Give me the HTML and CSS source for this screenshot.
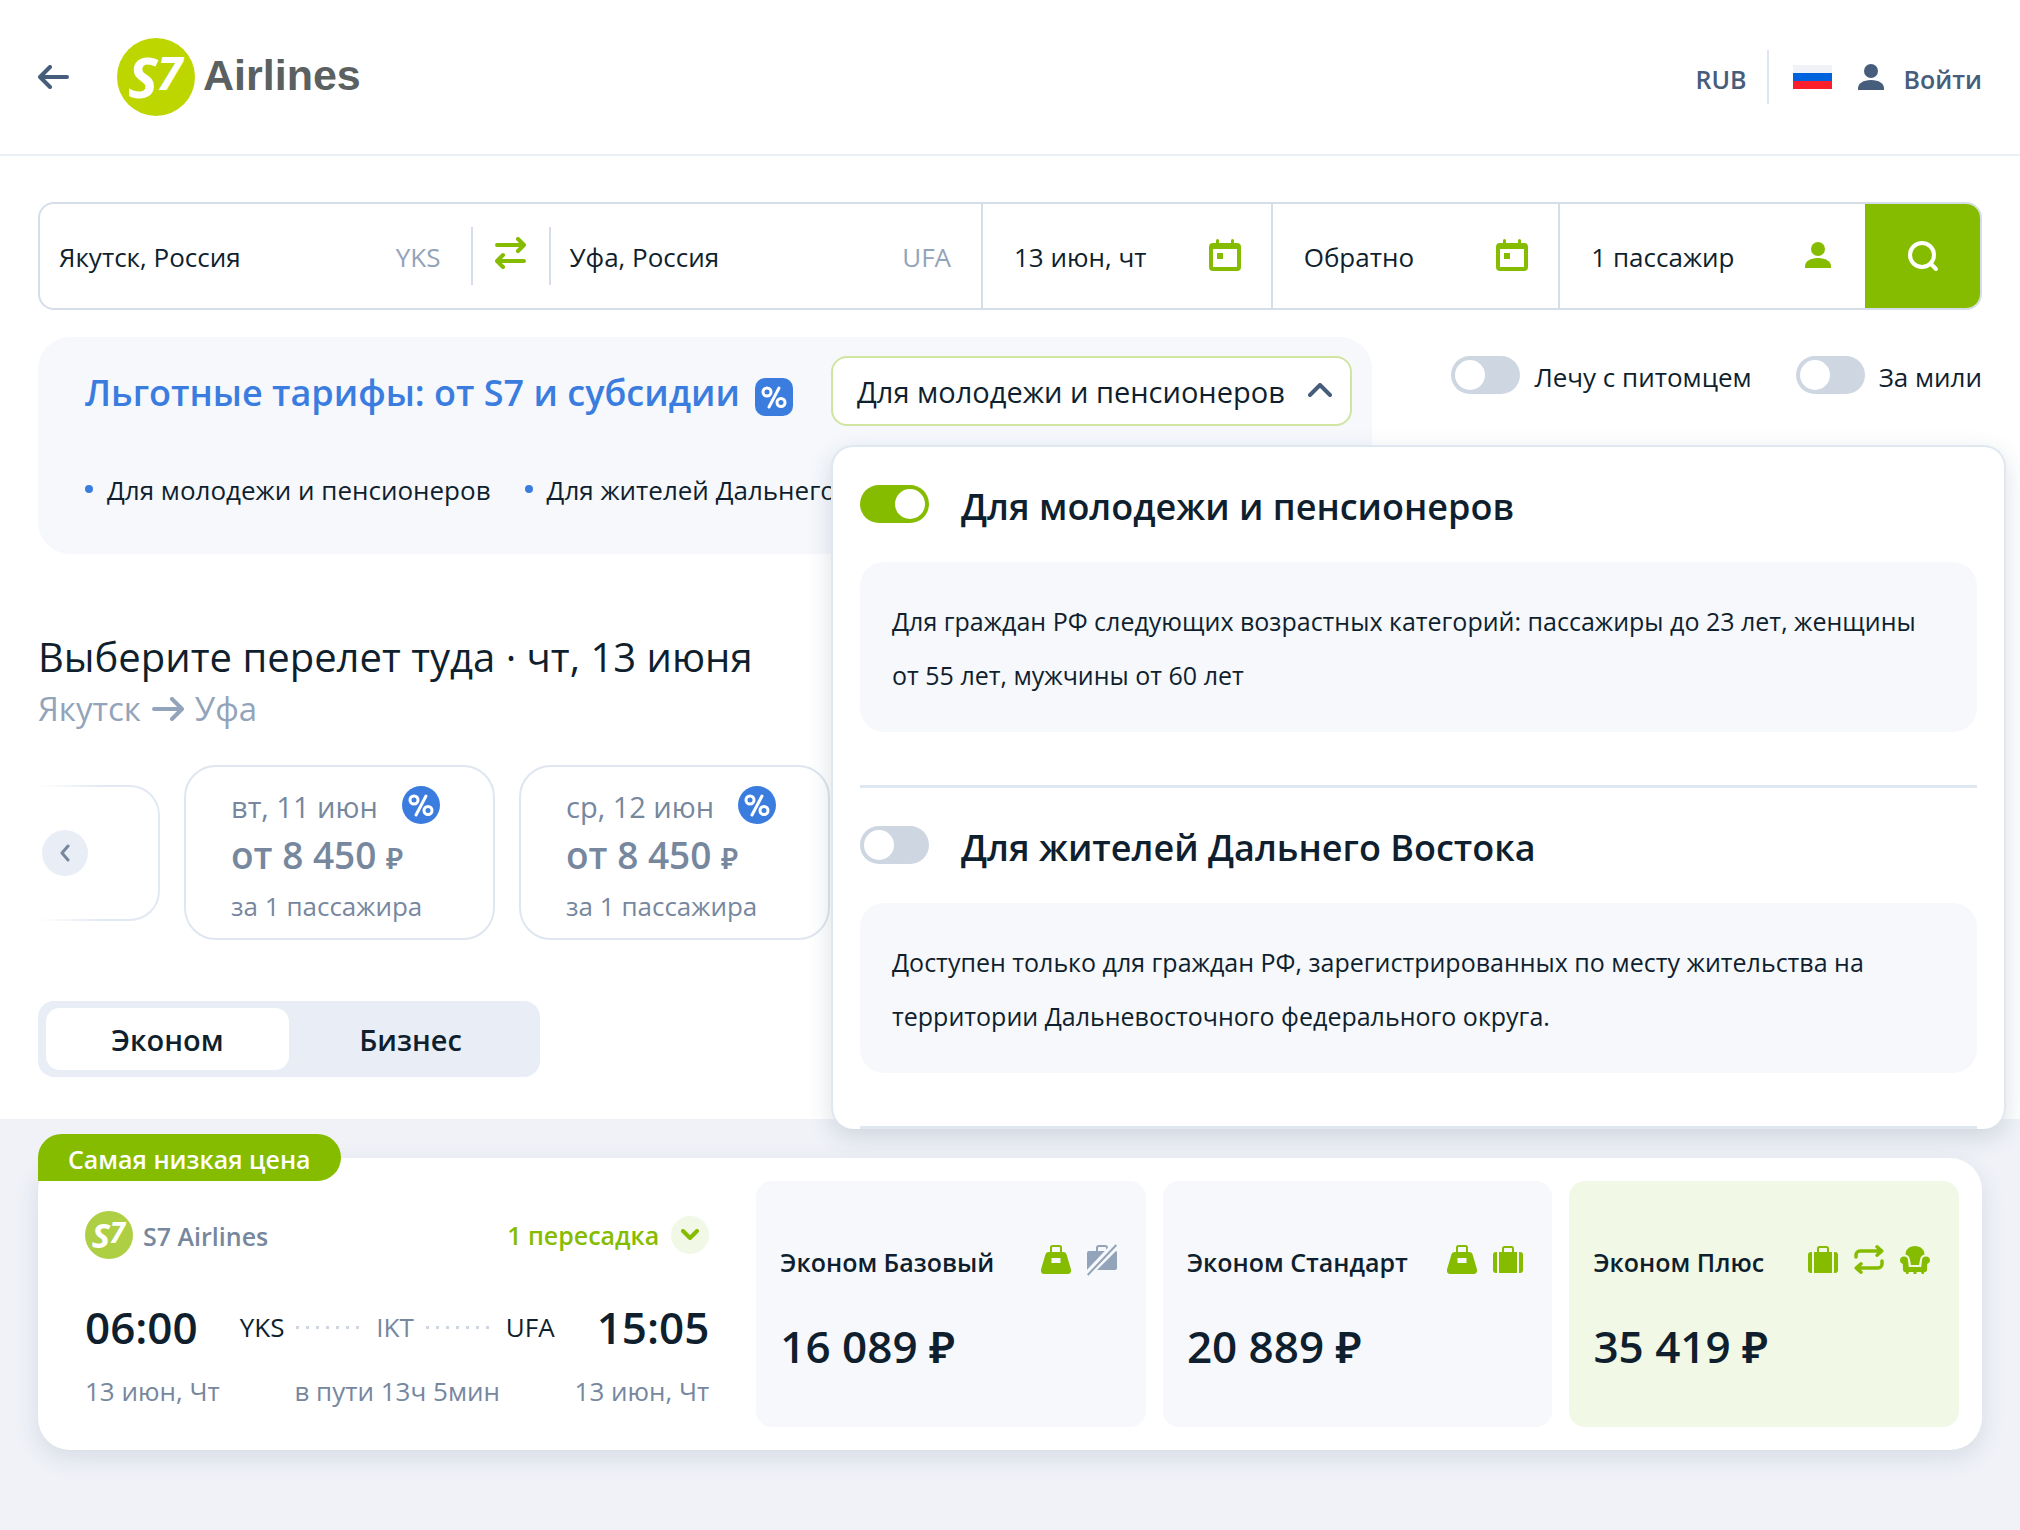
FILE: index.html
```html
<!DOCTYPE html>
<html lang="ru">
<head>
<meta charset="utf-8">
<meta name="viewport" content="width=device-width, initial-scale=1">
<title>S7 Airlines</title>
<link rel="stylesheet" href="styles.css">
</head>
<body>
<svg class="sprite" aria-hidden="true">
  <symbol id="calendar" viewBox="0 0 32 32">
    <path fill="currentColor" fill-rule="evenodd" d="M7 1.500a1.500 1.500 0 0 1 3 0V4h12V1.500a1.500 1.500 0 0 1 3 0V4h3a4 4 0 0 1 4 4v20a4 4 0 0 1-4 4H4a4 4 0 0 1-4-4V8a4 4 0 0 1 4-4h3zM4 10v18h24V10zM8 14h6v6H8z"/>
  </symbol>
  <symbol id="person" viewBox="0 0 26 26">
    <circle cx="13" cy="7" r="7" fill="currentColor"/>
    <path fill="currentColor" d="M0 26v-1.500c0-5 5-8.500 13-8.500s13 3.500 13 8.500V26z"/>
  </symbol>
  <symbol id="bag" viewBox="0 0 30 30">
    <path fill="none" stroke="currentColor" stroke-width="2" d="M10 9V2.500A1.500 1.500 0 0 1 11.500 1h7A1.500 1.500 0 0 1 20 2.500V9"/>
    <path fill="currentColor" fill-rule="evenodd" d="M8 7h14c2 0 3 .8 3.600 2.500L30 24.500c.4 3-.8 4.500-3 4.500H3c-2.200 0-3.400-1.500-3-4.500l4.400-15C5 7.800 6 7 8 7zM10.500 13v5h9v-5z"/>
  </symbol>
  <symbol id="suitcase" viewBox="0 0 30 30">
    <path fill="none" stroke="currentColor" stroke-width="2" d="M10 8V3.500A1.500 1.500 0 0 1 11.500 2h7A1.500 1.500 0 0 1 20 3.500V8"/>
    <path fill="currentColor" d="M6 7h18v21H6zM4 7v21H3a3 3 0 0 1-3-3V10a3 3 0 0 1 3-3zM26 7v21h1a3 3 0 0 0 3-3V10a3 3 0 0 0-3-3z"/>
  </symbol>
  <symbol id="no-luggage" viewBox="0 0 30 32">
    <path fill="none" stroke="currentColor" stroke-width="2" d="M10 8V4a2 2 0 0 1 2-2h6a2 2 0 0 1 2 2v4"/>
    <path fill="currentColor" d="M2 7h19L0 28V9a2 2 0 0 1 2-2zM29 7a2 2 0 0 1 1 1.500V24a2 2 0 0 1-2 2H10z"/>
    <path fill="none" stroke="#f6f8fc" stroke-width="3" d="M0 28L25 1.500"/>
    <path fill="none" stroke="currentColor" stroke-width="2" d="M.7 31L29.300 1"/>
  </symbol>
  <symbol id="exchange" viewBox="0 0 30 30">
    <path fill="none" stroke="currentColor" stroke-width="3.500" stroke-linecap="round" stroke-linejoin="round" d="M2 12V10a4 4 0 0 1 4-4H27M23 1.800L27.800 6 23 10.200M28 16v3a4 4 0 0 1-4 4H3M7 18.800L2.200 23 7 27.200"/>
  </symbol>
  <symbol id="armchair" viewBox="0 0 30 30">
    <path fill="currentColor" d="M15 1c5.500 0 9.500 3.500 9.500 8.500-2.800.7-4.200 2.500-4.500 5.500l-1 5h-8l-1-5c-.3-3-1.700-4.800-4.500-5.500C5.500 4.500 9.500 1 15 1z"/>
    <path fill="currentColor" d="M4 11.500c2.500 0 4 1.600 4 4l.8 6.500h12.400l.8-6.500c0-2.400 1.500-4 4-4s4 1.700 4 3.800c0 1.700-1 3.100-2.800 3.700L27 25c-.2 1.500-1 2-2.500 2l-.8 2h-1.900L21 27h-4.500v2h-3v-2H9l-.8 2H6.300l-.8-2C4 27 3.200 26.500 3 25l-.2-6C1 18.400 0 17 0 15.300c0-2.100 1.500-3.800 4-3.800z"/>
  </symbol>
  <symbol id="percent" viewBox="0 0 38 38">
    <g fill="none" stroke="#fff" stroke-width="3"><circle cx="12" cy="14" r="4"/><circle cx="26" cy="24.500" r="4"/><path stroke-linecap="round" d="M24 10L14 29"/></g>
  </symbol>
</svg>

<header class="header">
  <a class="back" href="#" aria-label="Назад">
    <svg width="31" height="24" viewBox="0 0 31 24"><path fill="none" stroke="currentColor" stroke-width="4" stroke-linecap="round" stroke-linejoin="round" d="M12 2L2 12l10 10M3 12h26"/></svg>
  </a>
  <a class="logo" href="#">
    <svg class="logo-mark" viewBox="0 0 78 78">
      <circle cx="39" cy="39" r="39" fill="currentColor"/>
      <text class="s7-mark" x="11" y="60" font-size="56">S</text>
      <text class="s7-mark" x="40" y="52" font-size="46">7</text>
    </svg>
    <span class="logo-name">Airlines</span>
  </a>
  <nav class="account">
    <button class="currency" type="button">RUB</button>
    <span class="account-line"></span>
    <button class="flag" type="button" aria-label="Россия"></button>
    <a class="login" href="#"><svg width="26" height="26" aria-hidden="true"><use href="#person"/></svg><span>Войти</span></a>
  </nav>
</header>

<main>
  <section class="top">
    <form class="search">
      <label class="field"><input type="text" value="Якутск, Россия" aria-label="Откуда"><span class="code">YKS</span></label>
      <button class="swap" type="button" aria-label="Поменять местами">
        <svg width="31" height="32" viewBox="0 0 31 32"><path fill="none" stroke="currentColor" stroke-width="4" stroke-linecap="round" stroke-linejoin="round" d="M2 8h26M23 2l6 6-6 6M29 24H3M8 18l-6 6 6 6"/></svg>
      </button>
      <label class="field"><input type="text" value="Уфа, Россия" aria-label="Куда"><span class="code">UFA</span></label>
      <button class="pick" type="button">13 июн, чт<svg width="32" height="32" aria-hidden="true"><use href="#calendar"/></svg></button>
      <button class="pick" type="button">Обратно<svg width="32" height="32" aria-hidden="true"><use href="#calendar"/></svg></button>
      <button class="pick pick-people" type="button">1 пассажир<svg width="26" height="26" aria-hidden="true"><use href="#person"/></svg></button>
      <button class="find" type="submit" aria-label="Найти">
        <svg width="32" height="32" viewBox="0 0 32 32"><path fill="none" stroke="currentColor" stroke-width="4" stroke-linecap="round" d="M24 24l5 5"/><circle cx="15" cy="15" r="12" fill="none" stroke="currentColor" stroke-width="4"/></svg>
      </button>
    </form>

    <div class="options">
      <div class="promo">
        <div class="promo-head">
          <h2 class="promo-title">Льготные тарифы: от S7 и субсидии</h2>
          <svg class="percent percent-square" aria-hidden="true"><use href="#percent"/></svg>
          <div class="picker">
            <button class="picker-button" type="button" aria-expanded="true">Для молодежи и пенсионеров
              <svg width="24" height="14" viewBox="0 0 24 14" aria-hidden="true"><path fill="none" stroke="currentColor" stroke-width="4" stroke-linecap="round" stroke-linejoin="round" d="M2 12L12 2l10 10"/></svg>
            </button>
            <div class="popup">
              <div class="tariff">
                <label class="tariff-head"><input class="switch" type="checkbox" role="switch" checked>Для молодежи и пенсионеров</label>
                <p class="note">Для граждан РФ следующих возрастных категорий: пассажиры до 23 лет, женщины от 55 лет, мужчины от 60 лет</p>
              </div>
              <div class="tariff">
                <label class="tariff-head"><input class="switch" type="checkbox" role="switch">Для жителей Дальнего Востока</label>
                <p class="note">Доступен только для граждан РФ, зарегистрированных по месту жительства на территории Дальневосточного федерального округа.</p>
              </div>
            </div>
          </div>
        </div>
        <ul class="promo-list">
          <li>Для молодежи и пенсионеров</li>
          <li>Для жителей Дальнего</li>
        </ul>
      </div>
      <div class="extras">
        <label class="extra"><input class="switch" type="checkbox" role="switch"><span>Лечу с питомцем</span></label>
        <label class="extra"><input class="switch" type="checkbox" role="switch"><span>За мили</span></label>
      </div>
    </div>

    <h1 class="title">Выберите перелет туда · чт, 13 июня</h1>
    <p class="route-name">Якутск
      <svg width="32" height="24" viewBox="0 0 32 24" aria-label="в"><path fill="none" stroke="currentColor" stroke-width="4" stroke-linecap="round" stroke-linejoin="round" d="M2 12h27M20 2l10 10-10 10"/></svg>
      Уфа</p>

    <div class="days">
      <div class="day-edge">
        <button class="prev" type="button" aria-label="Предыдущие дни"><svg width="12" height="18" viewBox="0 0 12 18"><path fill="none" stroke="currentColor" stroke-width="3" stroke-linecap="round" stroke-linejoin="round" d="M9 2L3 9l6 7"/></svg></button>
      </div>
      <button class="day" type="button">
        <span class="day-date">вт, 11 июн<svg class="percent" aria-hidden="true"><use href="#percent"/></svg></span>
        <span class="day-price">от 8 450 <small>₽</small></span>
        <span class="day-people">за 1 пассажира</span>
      </button>
      <button class="day" type="button">
        <span class="day-date">ср, 12 июн<svg class="percent" aria-hidden="true"><use href="#percent"/></svg></span>
        <span class="day-price">от 8 450 <small>₽</small></span>
        <span class="day-people">за 1 пассажира</span>
      </button>
    </div>

    <div class="cabins">
      <button class="cabin cabin-active" type="button">Эконом</button>
      <button class="cabin" type="button">Бизнес</button>
    </div>
  </section>

  <section class="results">
    <article class="flight">
      <span class="badge">Самая низкая цена</span>
      <div class="trip">
        <div class="trip-head">
          <svg class="carrier-mark" viewBox="0 0 78 78">
            <circle cx="39" cy="39" r="39" fill="currentColor"/>
            <text class="s7-mark" x="11" y="60" font-size="56">S</text>
            <text class="s7-mark" x="40" y="52" font-size="46">7</text>
          </svg>
          <span class="carrier">S7 Airlines</span>
          <button class="stops" type="button">1 пересадка
            <span class="stops-icon"><svg width="18" height="12" viewBox="0 0 18 12"><path fill="none" stroke="currentColor" stroke-width="4" stroke-linecap="round" stroke-linejoin="round" d="M2 2l7 7 7-7"/></svg></span>
          </button>
        </div>
        <div class="trip-route">
          <time class="clock">06:00</time>
          <span class="airports"><span>YKS</span><i class="dots"></i><span class="transfer">IKT</span><i class="dots"></i><span>UFA</span></span>
          <time class="clock">15:05</time>
        </div>
        <div class="trip-dates"><span>13 июн, Чт</span><span>в пути 13ч 5мин</span><span>13 июн, Чт</span></div>
      </div>
      <div class="fares">
        <button class="fare" type="button">
          <span class="fare-head">Эконом Базовый<span class="perks"><svg><use href="#bag"/></svg><svg class="perk-off"><use href="#no-luggage"/></svg></span></span>
          <span class="fare-price">16 089 ₽</span>
        </button>
        <button class="fare" type="button">
          <span class="fare-head">Эконом Стандарт<span class="perks"><svg><use href="#bag"/></svg><svg><use href="#suitcase"/></svg></span></span>
          <span class="fare-price">20 889 ₽</span>
        </button>
        <button class="fare fare-plus" type="button">
          <span class="fare-head">Эконом Плюс<span class="perks"><svg><use href="#suitcase"/></svg><svg><use href="#exchange"/></svg><svg><use href="#armchair"/></svg></span></span>
          <span class="fare-price">35 419 ₽</span>
        </button>
      </div>
    </article>
  </section>
</main>
</body>
</html>
```
FILE: styles.css
```css
:root {
  --ink: #0f1f2e;
  --slate: #465d7c;
  --muted: #76879e;
  --pale: #93a3b9;
  --line: #d5dde8;
  --soft: #f6f8fc;
  --green: #86bc00;
  --blue: #3b7ddf;
}

* { box-sizing: border-box; }

body {
  margin: 0;
  min-height: 100vh;
  background: #f0f2f8;
  color: var(--ink);
  font: 26px/40px "Open Sans", "Noto Sans", sans-serif;
}

h1, h2, p, ul { margin: 0; padding: 0; font-weight: 400; }
button, input { font: inherit; color: inherit; }
button { margin: 0; padding: 0; border: 0; background: none; text-align: left; cursor: pointer; }
a { color: inherit; text-decoration: none; }
svg { display: block; flex: none; }
.sprite { position: absolute; width: 0; height: 0; }

.s7-mark {
  fill: #fff;
  font-family: "Open Sans", sans-serif;
  font-style: italic;
  font-weight: 700;
}

/* Header */
.header {
  display: flex;
  align-items: center;
  height: 156px;
  padding: 0 38px;
  background: #fff;
  border-bottom: 2px solid #ebeff6;
  color: var(--slate);
}
.logo { display: flex; align-items: center; gap: 8px; margin-left: 48px; }
.logo-mark { width: 78px; height: 78px; color: #bed600; }
.logo-name {
  padding-bottom: 4px;
  color: #5b6061;
  font: 700 43px/48px "Liberation Sans", Arial, sans-serif;
}
.account { display: flex; align-items: center; margin-left: auto; font-size: 25px; font-weight: 600; }
.currency, .login span { padding-top: 4px; }
.account-line { width: 2px; height: 54px; margin: 0 24px 0 20px; background: #dfe6f0; }
.flag {
  width: 39px;
  height: 24px;
  background: linear-gradient(#f0f2f8 33%, #0062dd 33% 66%, #fb1f2b 66%);
}
.login { display: flex; align-items: center; gap: 20px; margin-left: 26px; }

/* Search form */
.top { padding: 46px 38px 42px; background: #fff; }
.search {
  display: grid;
  grid-template-columns: 431fr 80px 431fr 290fr 288fr 307fr 115px;
  height: 108px;
  border: 2px solid var(--line);
  border-radius: 16px;
}
.field { display: flex; align-items: center; padding: 2px 30px 0 19px; }
.field input {
  flex: 1;
  min-width: 0;
  padding: 0;
  border: 0;
  outline: 0;
  background: none;
}
.code { color: var(--pale); }
.swap {
  display: grid;
  place-items: center;
  align-self: center;
  height: 58px;
  padding-bottom: 6px;
  border: solid var(--line);
  border-width: 0 2px;
  color: var(--green);
}
.pick {
  display: flex;
  align-items: center;
  justify-content: space-between;
  padding: 2px 30px 0 31px;
  border-left: 2px solid var(--line);
}
.pick svg { margin-bottom: 4px; color: var(--green); }
.pick-people { padding-right: 34px; }
.find {
  display: grid;
  place-items: center;
  border-radius: 0 14px 14px 0;
  background: var(--green);
  color: #fff;
}

/* Discount tariffs */
.options { display: flex; justify-content: space-between; margin-top: 27px; }
.promo {
  flex: 0 1 1334px;
  padding: 19px 20px 44px 47px;
  border-radius: 32px;
  background: var(--soft);
}
.promo-head { display: flex; align-items: center; }
.promo-title { padding-top: 4px; color: var(--blue); font-size: 36px; font-weight: 600; line-height: 48px; white-space: nowrap; }
.percent { width: 38px; height: 38px; border-radius: 50%; background: var(--blue); }
.percent-square { margin: 11px 0 0 15px; border-radius: 10px; }
.picker { position: relative; width: 521px; margin-left: auto; }
.picker-button {
  display: flex;
  align-items: center;
  justify-content: space-between;
  width: 100%;
  height: 70px;
  padding: 2px 18px 0 24px;
  border: 2px solid #cfe5a0;
  border-radius: 16px;
  background: #fff;
  font-size: 29px;
  white-space: nowrap;
}
.picker-button svg { margin-bottom: 4px; color: var(--slate); }
.promo-list { display: flex; gap: 34px; margin-top: 44px; list-style: none; white-space: nowrap; }
.promo-list li { display: flex; gap: 14px; }
.promo-list li::before {
  content: "";
  width: 8px;
  height: 8px;
  margin-top: 15px;
  border-radius: 50%;
  background: var(--blue);
}

.switch {
  appearance: none;
  flex: none;
  display: flex;
  width: 69px;
  height: 38px;
  margin: 0;
  padding: 4px;
  border-radius: 19px;
  background: #ced6e2;
}
.switch::before { content: ""; width: 30px; height: 30px; border-radius: 50%; background: #fff; }
.switch:checked { justify-content: flex-end; background: var(--green); }
.extras { display: flex; gap: 44px; padding-top: 18px; }
.extra { display: flex; align-items: center; gap: 14px; height: 40px; white-space: nowrap; }
.extra span { padding-top: 4px; }

/* Drop-down with the tariff switches */
.popup {
  position: absolute;
  top: 89px;
  left: 0;
  z-index: 2;
  width: 1175px;
  padding: 0 27px;
  border: 2px solid #dfe7f1;
  border-bottom: 0;
  border-radius: 22px;
  background: #fff;
  box-shadow: 0 8px 24px rgba(30, 55, 90, .16);
}
.tariff { padding: 30px 0 53px; border-bottom: 3px solid #dfe7f1; }
.tariff-head {
  display: flex;
  align-items: center;
  gap: 32px;
  height: 60px;
  font-size: 36px;
  font-weight: 600;
}
.tariff-head .switch { margin-bottom: 6px; }
.note {
  margin-top: 25px;
  padding: 32px 32px 30px;
  border-radius: 24px;
  background: var(--soft);
  font-size: 25px;
  line-height: 54px;
}

/* Day carousel */
.title { margin-top: 75px; font-size: 40px; line-height: 56px; }
.route-name { display: flex; align-items: center; gap: 11px; color: var(--pale); font-size: 33px; line-height: 48px; }
.days { display: flex; align-items: center; gap: 24px; margin-top: 32px; }
.day-edge {
  display: flex;
  align-items: center;
  width: 122px;
  height: 136px;
  padding-left: 4px;
  border: 2px solid;
  border-color: #e3e9f2;
  border-left: 0;
  border-radius: 0 30px 30px 0;
  position: relative;
}
.day-edge::before {
  content: "";
  position: absolute;
  inset: -2px auto -2px 0;
  width: 64px;
  background: linear-gradient(90deg, #fff, rgba(255, 255, 255, 0));
}
.prev {
  position: relative;
  display: grid;
  place-items: center;
  width: 46px;
  height: 46px;
  border-radius: 50%;
  background: #e9eef6;
  color: var(--muted);
}
.day {
  display: flex;
  flex-direction: column;
  width: 311px;
  height: 175px;
  padding: 20px 45px 14px;
  border: 2px solid #dfe6f0;
  border-radius: 32px;
  color: var(--muted);
}
.day-date { display: flex; align-items: center; gap: 24px; height: 40px; font-size: 29px; line-height: 40px; }
.day-date .percent { margin-bottom: 4px; }
.day-price { margin-top: 8px; font-size: 37px; font-weight: 600; line-height: 40px; }
.day-price small { font-size: 29px; }
.day-people { margin-top: 8px; }

/* Cabin tabs */
.cabins {
  display: grid;
  grid-template-columns: 1fr 1fr;
  width: 502px;
  height: 76px;
  margin-top: 61px;
  padding: 7px 8px;
  border-radius: 16px;
  background: #e9eef6;
}
.cabin { padding-top: 2px; border-radius: 14px; font-size: 29px; font-weight: 600; text-align: center; }
.cabin-active { background: #fff; }

/* Flight card */
.results { padding: 39px 38px 80px; }
.flight {
  position: relative;
  display: grid;
  grid-template-columns: 624fr 1202fr;
  gap: 47px;
  padding: 23px 23px 23px 47px;
  border-radius: 32px;
  background: #fff;
  box-shadow: 0 8px 24px rgba(30, 55, 90, .12);
}
.badge {
  position: absolute;
  top: -24px;
  left: 0;
  height: 47px;
  padding: 5px 30px 0;
  border-radius: 24px 24px 24px 0;
  background: var(--green);
  color: #fff;
  font-size: 25px;
  font-weight: 600;
}
.trip { padding-top: 30px; }
.trip-head { display: flex; align-items: center; color: var(--muted); font-size: 25px; font-weight: 600; }
.carrier-mark { width: 48px; height: 48px; color: #aecf43; }
.carrier { margin-left: 10px; padding-top: 2px; }
.stops { display: flex; align-items: center; gap: 12px; margin-left: auto; color: var(--green); }
.stops-icon { display: grid; place-items: center; width: 38px; height: 38px; border-radius: 50%; background: #f1f8e5; }
.trip-route { display: flex; align-items: center; gap: 42px; margin-top: 40px; }
.clock { font-size: 44px; font-weight: 600; line-height: 56px; }
.airports { display: flex; flex: 1; align-items: center; gap: 12px; }
.transfer { color: var(--muted); }
.dots {
  flex: 1;
  height: 3px;
  background: repeating-linear-gradient(90deg, #ced6e2 0 3px, transparent 3px 10px);
}
.trip-dates { display: flex; justify-content: space-between; margin-top: 16px; color: var(--muted); }

.fares { display: grid; grid-template-columns: repeat(3, 1fr); gap: 17px; }
.fare {
  display: flex;
  flex-direction: column;
  gap: 36px;
  height: 246px;
  padding: 61px 29px 0 24px;
  border-radius: 16px;
  background: var(--soft);
}
.fare-plus { background: #f1f8e5; }
.fare-head {
  display: flex;
  align-items: center;
  justify-content: space-between;
  width: 100%;
  font-size: 25px;
  font-weight: 600;
  white-space: nowrap;
}
.perks { display: flex; gap: 16px; margin-bottom: 4px; color: var(--green); }
.perks svg { width: 30px; height: 32px; }
.perk-off { color: var(--pale); }
.fare-price { font-size: 44px; font-weight: 600; line-height: 56px; }
```
